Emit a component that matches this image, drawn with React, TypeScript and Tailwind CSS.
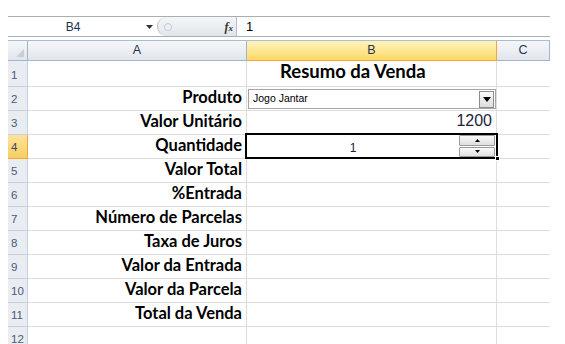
import React from "react";

const labels: { n: number; label: string }[] = [
  { n: 1, label: "" },
  { n: 2, label: "Produto" },
  { n: 3, label: "Valor Unitário" },
  { n: 4, label: "Quantidade" },
  { n: 5, label: "Valor Total" },
  { n: 6, label: "%Entrada" },
  { n: 7, label: "Número de Parcelas" },
  { n: 8, label: "Taxa de Juros" },
  { n: 9, label: "Valor da Entrada" },
  { n: 10, label: "Valor da Parcela" },
  { n: 11, label: "Total da Venda" },
  { n: 12, label: "" },
];

const labelFont = { fontFamily: "Lato, 'Open Sans', sans-serif" } as const;
const uiFont = { fontFamily: "'Liberation Sans', Arial, sans-serif" } as const;

function BCell({ n }: { n: number }) {
  if (n === 1) {
    return (
      <div className="flex h-full items-end pb-[0px] pl-[33px] text-[18.5px] font-bold text-black" style={labelFont}>
        Resumo da Venda
      </div>
    );
  }
  if (n === 2) {
    return (
      <div className="flex h-full items-center pl-[1px] pr-[0px] pt-[1px]">
        <div className="flex h-[20px] w-full items-center border border-[#a5a5a5] bg-white">
          <span className="flex-1 pl-[4px] text-[10.5px] text-black" style={uiFont}>
            Jogo Jantar
          </span>
          <div className="mr-[1px] flex h-[17px] w-[15px] items-center justify-center border border-[#8d8d8d] bg-gradient-to-b from-[#fbfbfb] to-[#dcdcdc]">
            <svg width="8" height="5" viewBox="0 0 8 5">
              <path d="M0 0 L8 0 L4 5 Z" fill="#000" />
            </svg>
          </div>
        </div>
      </div>
    );
  }
  if (n === 3) {
    return (
      <div className="flex h-full items-end justify-end pb-[1px] pr-[4px] text-[16px] text-[#1c2438]" style={uiFont}>
        1200
      </div>
    );
  }
  if (n === 4) {
    return (
      <div className="relative h-full w-full">
        <div className="absolute inset-x-[-2px] top-[-2px] bottom-[-1px] flex border-2 border-black bg-white">
          <div className="flex flex-1 items-center justify-center pt-[3px] text-[12px] text-[#1a2440]" style={uiFont}>
            1
          </div>
          <div className="flex w-[37px] flex-col gap-[1px] pr-[1px]">
            <div className="flex h-[11px] items-center justify-center rounded-[1px] border border-[#9a9a9a] bg-gradient-to-b from-[#fafafa] to-[#dedede]">
              <svg width="5" height="3" viewBox="0 0 5 3">
                <path d="M0 3 L5 3 L2.5 0 Z" fill="#000" />
              </svg>
            </div>
            <div className="flex h-[11px] items-center justify-center rounded-[1px] border border-[#9a9a9a] bg-gradient-to-b from-[#fafafa] to-[#dedede]">
              <svg width="5" height="3" viewBox="0 0 5 3">
                <path d="M0 0 L5 0 L2.5 3 Z" fill="#000" />
              </svg>
            </div>
          </div>
          <div className="absolute bottom-[-4px] right-[-4px] h-[5px] w-[5px] border border-white bg-black" />
        </div>
      </div>
    );
  }
  return null;
}

export default function App() {
  return (
    <div className="h-[344px] w-[565px] overflow-hidden bg-white pl-2 pt-4">
      <div className="w-[542px]">
        {/* Formula bar */}
        <div className="flex h-[21px] border-y border-[#a9aeb5] bg-white">
          <div className="flex w-[149px] items-center">
            <span className="w-[130px] text-center text-[12px] text-[#1f2f4f]" style={uiFont}>
              B4
            </span>
            <svg width="7" height="4" viewBox="0 0 7 4" className="ml-[8px]">
              <path d="M0 0 L7 0 L3.5 4 Z" fill="#333" />
            </svg>
          </div>
          <div className="flex w-[79px] items-center rounded-l-[10px] border-l border-[#b9bec6] bg-gradient-to-b from-[#f4f6f8] to-[#e1e5ea]">
            <div className="ml-[6px] h-[8px] w-[8px] rounded-full border border-[#c8ccd2] bg-[#eef0f3]" />
            <span className="ml-auto mr-[3px] text-[12px] font-bold italic text-[#333]" style={{ fontFamily: "'Liberation Serif', serif" }}>
              f<span className="text-[9px]">x</span>
            </span>
          </div>
          <div className="flex flex-1 items-center border-l border-[#b9bec6] pl-[9px] text-[13px] text-black" style={uiFont}>
            1
          </div>
        </div>

        {/* Grid */}
        <div className="mt-[3px]">
          {/* column header */}
          <div className="flex h-[21px] border-t border-[#a9bdd3]">
            <div className="relative w-[20px] border-b border-r border-[#9eb6ce] bg-gradient-to-b from-[#f4f6f9] to-[#e2e6ec]">
              <svg width="8" height="8" viewBox="0 0 8 8" className="absolute bottom-[3px] right-[3px]">
                <path d="M8 0 L8 8 L0 8 Z" fill="#c9ced6" />
              </svg>
            </div>
            <div className="flex w-[219px] items-center justify-center border-b border-r border-[#9eb6ce] bg-gradient-to-b from-[#f4f6f9] to-[#e2e6ec] text-[12.5px] text-[#27344e]" style={uiFont}>
              A
            </div>
            <div className="flex w-[250px] items-center justify-center border-b border-r border-[#f2a53a] bg-gradient-to-b from-[#fff3bc] to-[#fdd962] text-[12.5px] text-[#27344e]" style={uiFont}>
              B
            </div>
            <div className="flex w-[53px] items-center justify-center border-b border-r border-[#9eb6ce] bg-gradient-to-b from-[#f4f6f9] to-[#e2e6ec] text-[12.5px] text-[#27344e]" style={uiFont}>
              C
            </div>
          </div>

          {labels.map((r) => (
            <div key={r.n} className={`flex ${r.n === 1 ? "h-[26px]" : "h-[24px]"}`}>
              <div
                className={`flex w-[20px] items-end border-b border-r pb-[2px] pl-[3px] text-[11.5px] ${
                  r.n === 4
                    ? "border-[#f2a53a] bg-gradient-to-b from-[#fde39a] to-[#f9cf62] text-[#3b4764]"
                    : "border-[#c5d1de] bg-[#e9edf2] text-[#4a5a78]"
                }`}
                style={uiFont}
              >
                {r.n}
              </div>
              <div
                className="flex w-[219px] items-end justify-end border-b border-r border-[#dadcdd] pb-[0px] pr-[4px] text-[16.5px] font-bold text-black"
                style={labelFont}
              >
                {r.label}
              </div>
              <div className="w-[250px] border-b border-r border-[#dadcdd]">
                <BCell n={r.n} />
              </div>
              <div className="w-[53px] border-b border-[#dadcdd]" />
            </div>
          ))}
        </div>
      </div>
    </div>
  );
}
